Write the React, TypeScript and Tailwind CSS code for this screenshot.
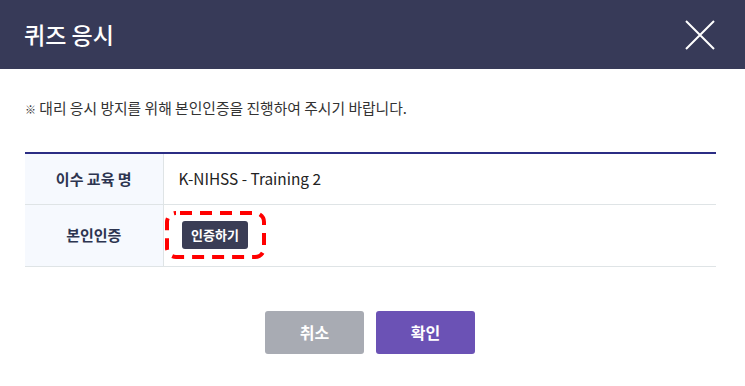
export default function App() {
  return (
    <div
      className="w-[745px] h-[386px] bg-white overflow-hidden"
      style={{ fontFamily: '"Noto Sans CJK KR", "Noto Sans", sans-serif' }}
    >
      <header className="flex h-[69px] items-center justify-between bg-[#373a58] pl-[24px] pr-[30px]">
        <h1 className="text-[23px] font-medium text-white">퀴즈 응시</h1>
        <svg width="30" height="30" viewBox="0 0 30 30" className="text-white">
          <path d="M1 1 L29 29 M29 1 L1 29" stroke="currentColor" strokeWidth="2" fill="none" />
        </svg>
      </header>

      <div className="px-[25px] pr-[29px]">
        <p className="mt-[27px] text-[14.8px] leading-[24px] text-[#333]">
          <span className="text-[11px] font-bold">※</span> 대리 응시 방지를 위해 본인인증을 진행하여 주시기 바랍니다.
        </p>

        <table className="mt-[31px] w-full border-collapse border-t-2 border-[#2b2d84]">
          <tbody>
            <tr className="border-b border-[#dfe4e6]">
              <th className="h-[51px] w-[138px] border-r border-[#dfe4e6] bg-[#f6f9fe] text-[15px] font-bold text-[#2d3550]">
                이수 교육 명
              </th>
              <td className="pl-[15px] text-[15.4px] text-[#222]">K-NIHSS - Training 2</td>
            </tr>
            <tr className="border-b border-[#dfe4e6]">
              <th className="h-[62px] border-r border-[#dfe4e6] bg-[#f6f9fe] text-[15px] font-bold text-[#2d3550]">
                본인인증
              </th>
              <td className="pl-[1px]">
                <div className="relative inline-flex h-[48px] w-[101px] items-center justify-center">
                  <svg className="absolute inset-0" width="101" height="48" viewBox="0 0 101 48">
                    <rect
                      x="2"
                      y="2"
                      width="97"
                      height="44"
                      rx="9"
                      fill="none"
                      stroke="#ff0000"
                      strokeWidth="4"
                      strokeDasharray="12 8"
                      strokeDashoffset="-4"
                    />
                  </svg>
                  <button className="relative h-[28px] rounded-[3px] bg-[#3a3d55] px-[9px] text-[13px] font-bold text-white">
                    인증하기
                  </button>
                </div>
              </td>
            </tr>
          </tbody>
        </table>
      </div>

      <div className="mt-[44px] flex justify-center gap-[12px] pr-[5px]">
        <button className="h-[43px] w-[99px] rounded-[3px] bg-[#a8abb3] text-[16px] font-bold text-white">취소</button>
        <button className="h-[43px] w-[99px] rounded-[3px] bg-[#6b52b5] text-[16px] font-bold text-white">확인</button>
      </div>
    </div>
  )
}
